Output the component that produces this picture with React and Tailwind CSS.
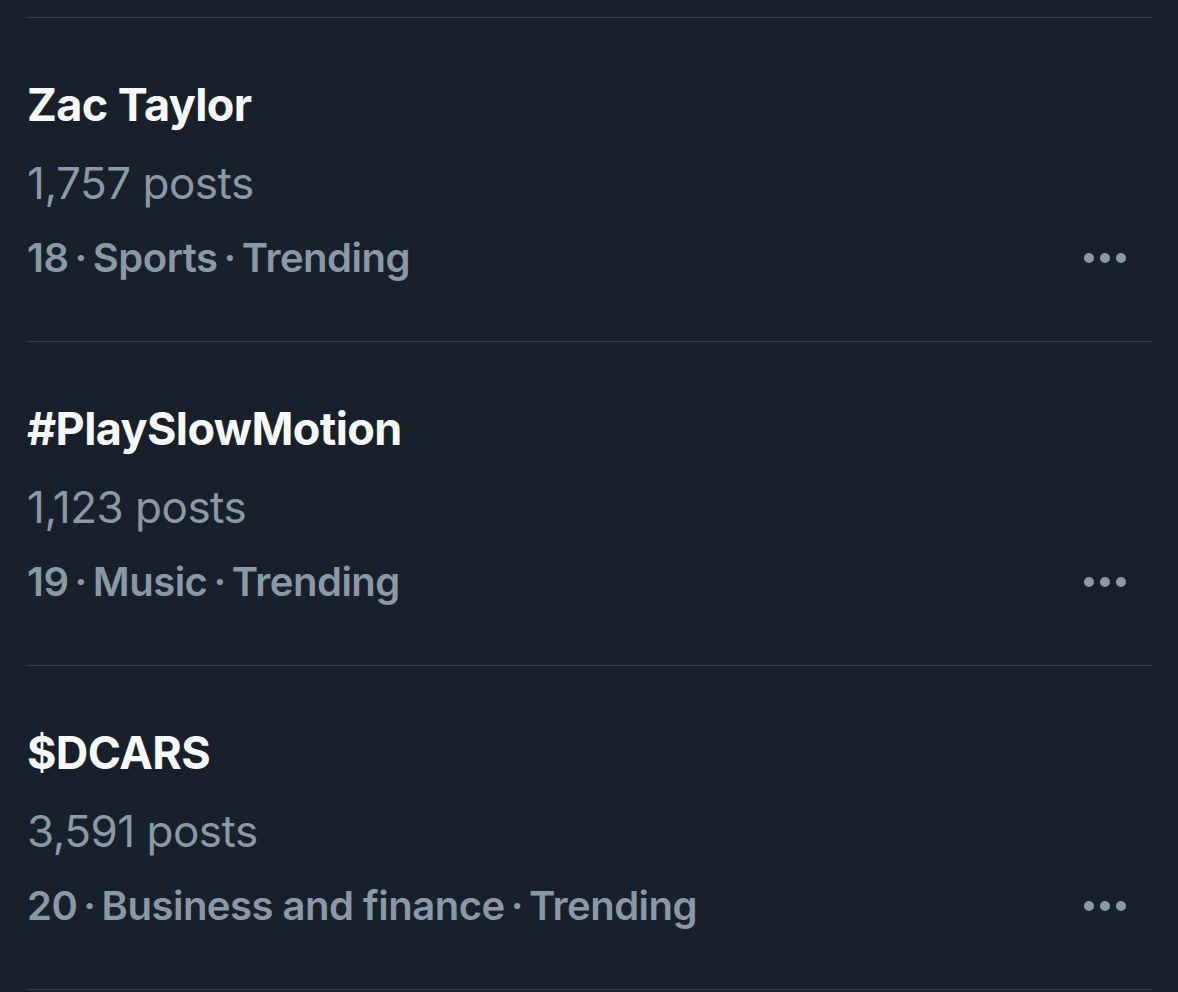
const trends = [
  { name: "Zac Taylor", posts: "1,757 posts", rank: 18, category: "Sports" },
  { name: "#PlaySlowMotion", posts: "1,123 posts", rank: 19, category: "Music" },
  { name: "$DCARS", posts: "3,591 posts", rank: 20, category: "Business and finance" },
];

function MoreDots() {
  return (
    <div className="flex items-center gap-[6px]">
      <span className="w-[10px] h-[10px] rounded-full bg-[#8b98a5]" />
      <span className="w-[10px] h-[10px] rounded-full bg-[#8b98a5]" />
      <span className="w-[10px] h-[10px] rounded-full bg-[#8b98a5]" />
    </div>
  );
}

function TrendRow({ trend }) {
  return (
    <div className="border-b border-[#38414b] pt-[48px] pb-[47px]">
      <p className="text-[45px] leading-[78px] font-bold text-[#f7f9f9] tracking-[-0.6px]">
        {trend.name}
      </p>
      <p className="text-[44px] leading-[78px] text-[#8b98a5] tracking-[-0.5px]">
        {trend.posts}
      </p>
      <div className="flex items-center justify-between h-[72px]">
        <p className="text-[40px] font-semibold text-[#8b98a5] tracking-[-0.5px]">
          {trend.rank}
          <span className="mx-[6px]">·</span>
          {trend.category}
          <span className="mx-[6px]">·</span>
          Trending
        </p>
        <div className="pr-[26px]">
          <MoreDots />
        </div>
      </div>
    </div>
  );
}

export default function App() {
  return (
    <div
      className="min-h-screen bg-[#17202b] pt-[17px] pl-[27px] pr-[26px]"
      style={{ fontFamily: "Inter, 'Liberation Sans', sans-serif" }}
    >
      <div className="border-t border-[#38414b]">
        {trends.map((trend) => (
          <TrendRow key={trend.rank} trend={trend} />
        ))}
      </div>
    </div>
  );
}
